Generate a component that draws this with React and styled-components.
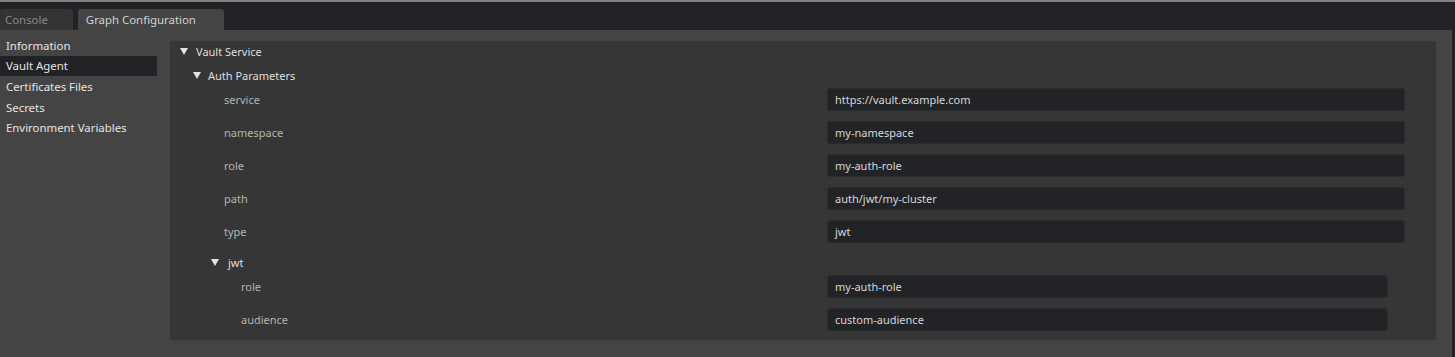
import React from 'react'
import styled, { createGlobalStyle } from 'styled-components'

const GlobalStyle = createGlobalStyle`
  html, body {
    margin: 0;
    padding: 0;
    background: #444444;
  }
  body {
    font-family: "Noto Sans", "Open Sans", sans-serif;
    font-size: 11px;
  }
`

const Page = styled.div`
  width: 1455px;
  height: 357px;
  display: flex;
  flex-direction: column;
  border-top: 2px solid #828282;
  box-sizing: border-box;
`

const TabBar = styled.div`
  height: 28px;
  background: #212226;
  display: flex;
  align-items: flex-end;
  gap: 5px;
  padding-top: 7px;
  box-sizing: border-box;
`

const Tab = styled.div`
  height: 21px;
  padding: ${p => (p.active ? '0 28px 0 8px' : '0 25px 0 5px')};
  background: ${p => (p.active ? '#444444' : '#333333')};
  color: ${p => (p.active ? '#d2d2d2' : '#8a8a8a')};
  border-radius: 3px 3px 0 0;
  display: flex;
  align-items: center;
  font-size: 11.4px;
`

const Body = styled.div`
  flex: 1;
  display: flex;
  background: #444444;
  border-right: 3px solid #212226;
`

const Sidebar = styled.div`
  width: 157px;
  padding-top: 5px;
  display: flex;
  flex-direction: column;
`

const NavItem = styled.div`
  height: 20.6px;
  display: flex;
  align-items: center;
  padding-left: 6px;
  font-size: 11.4px;
  color: #e4e4e4;
  background: ${p => (p.selected ? '#212226' : 'transparent')};
`

const Content = styled.div`
  flex: 1;
  padding: 11px 16px 17px 13px;
  display: flex;
`

const Panel = styled.div`
  flex: 1;
  background: #363636;
  border-radius: 2px;
  display: flex;
  flex-direction: column;
  padding-bottom: 9px;
`

const Header = styled.div`
  height: 20px;
  margin-top: ${p => p.mt || 0}px;
  padding-left: ${p => p.indent}px;
  display: flex;
  align-items: center;
  gap: ${p => p.gap || 8}px;
  color: #dedede;
`

const FieldRow = styled.div`
  display: grid;
  grid-template-columns: 657px 1fr;
  align-items: center;
  height: 23px;
  margin-top: ${p => p.mt}px;
  padding-right: ${p => p.right}px;
`

const Label = styled.div`
  padding-left: ${p => p.indent}px;
  color: #b4b4b4;
`

const Input = styled.div`
  height: 23px;
  box-sizing: border-box;
  background: #222327;
  border: 1px solid #2a2b2f;
  border-radius: 3px;
  display: flex;
  align-items: center;
  padding-left: 7px;
  color: #d6d6d6;
`

function Arrow() {
  return (
    <svg width="8" height="7" viewBox="0 0 8 7">
      <polygon points="0,0 8,0 4,7" fill="#e2e2e2" />
    </svg>
  )
}

const authFields = [
  ['service', 'https://vault.example.com'],
  ['namespace', 'my-namespace'],
  ['role', 'my-auth-role'],
  ['path', 'auth/jwt/my-cluster'],
  ['type', 'jwt'],
]

const jwtFields = [
  ['role', 'my-auth-role'],
  ['audience', 'custom-audience'],
]

const nav = ['Information', 'Vault Agent', 'Certificates Files', 'Secrets', 'Environment Variables']

export default function App() {
  return (
    <Page>
      <GlobalStyle />
      <TabBar>
        <Tab>Console</Tab>
        <Tab active>Graph Configuration</Tab>
      </TabBar>
      <Body>
        <Sidebar>
          {nav.map(n => (
            <NavItem key={n} selected={n === 'Vault Agent'}>{n}</NavItem>
          ))}
        </Sidebar>
        <Content>
          <Panel>
            <Header indent={10}>
              <Arrow />
              Vault Service
            </Header>
            <Header indent={23} mt={4} gap={7}>
              <Arrow />
              Auth Parameters
            </Header>
            {authFields.map(([k, v], i) => (
              <FieldRow key={k} mt={i === 0 ? 3 : 10} right={31}>
                <Label indent={54}>{k}</Label>
                <Input>{v}</Input>
              </FieldRow>
            ))}
            <Header indent={41} mt={9} gap={9}>
              <Arrow />
              jwt
            </Header>
            {jwtFields.map(([k, v], i) => (
              <FieldRow key={k} mt={i === 0 ? 3 : 10} right={48}>
                <Label indent={71}>{k}</Label>
                <Input>{v}</Input>
              </FieldRow>
            ))}
          </Panel>
        </Content>
      </Body>
    </Page>
  )
}
